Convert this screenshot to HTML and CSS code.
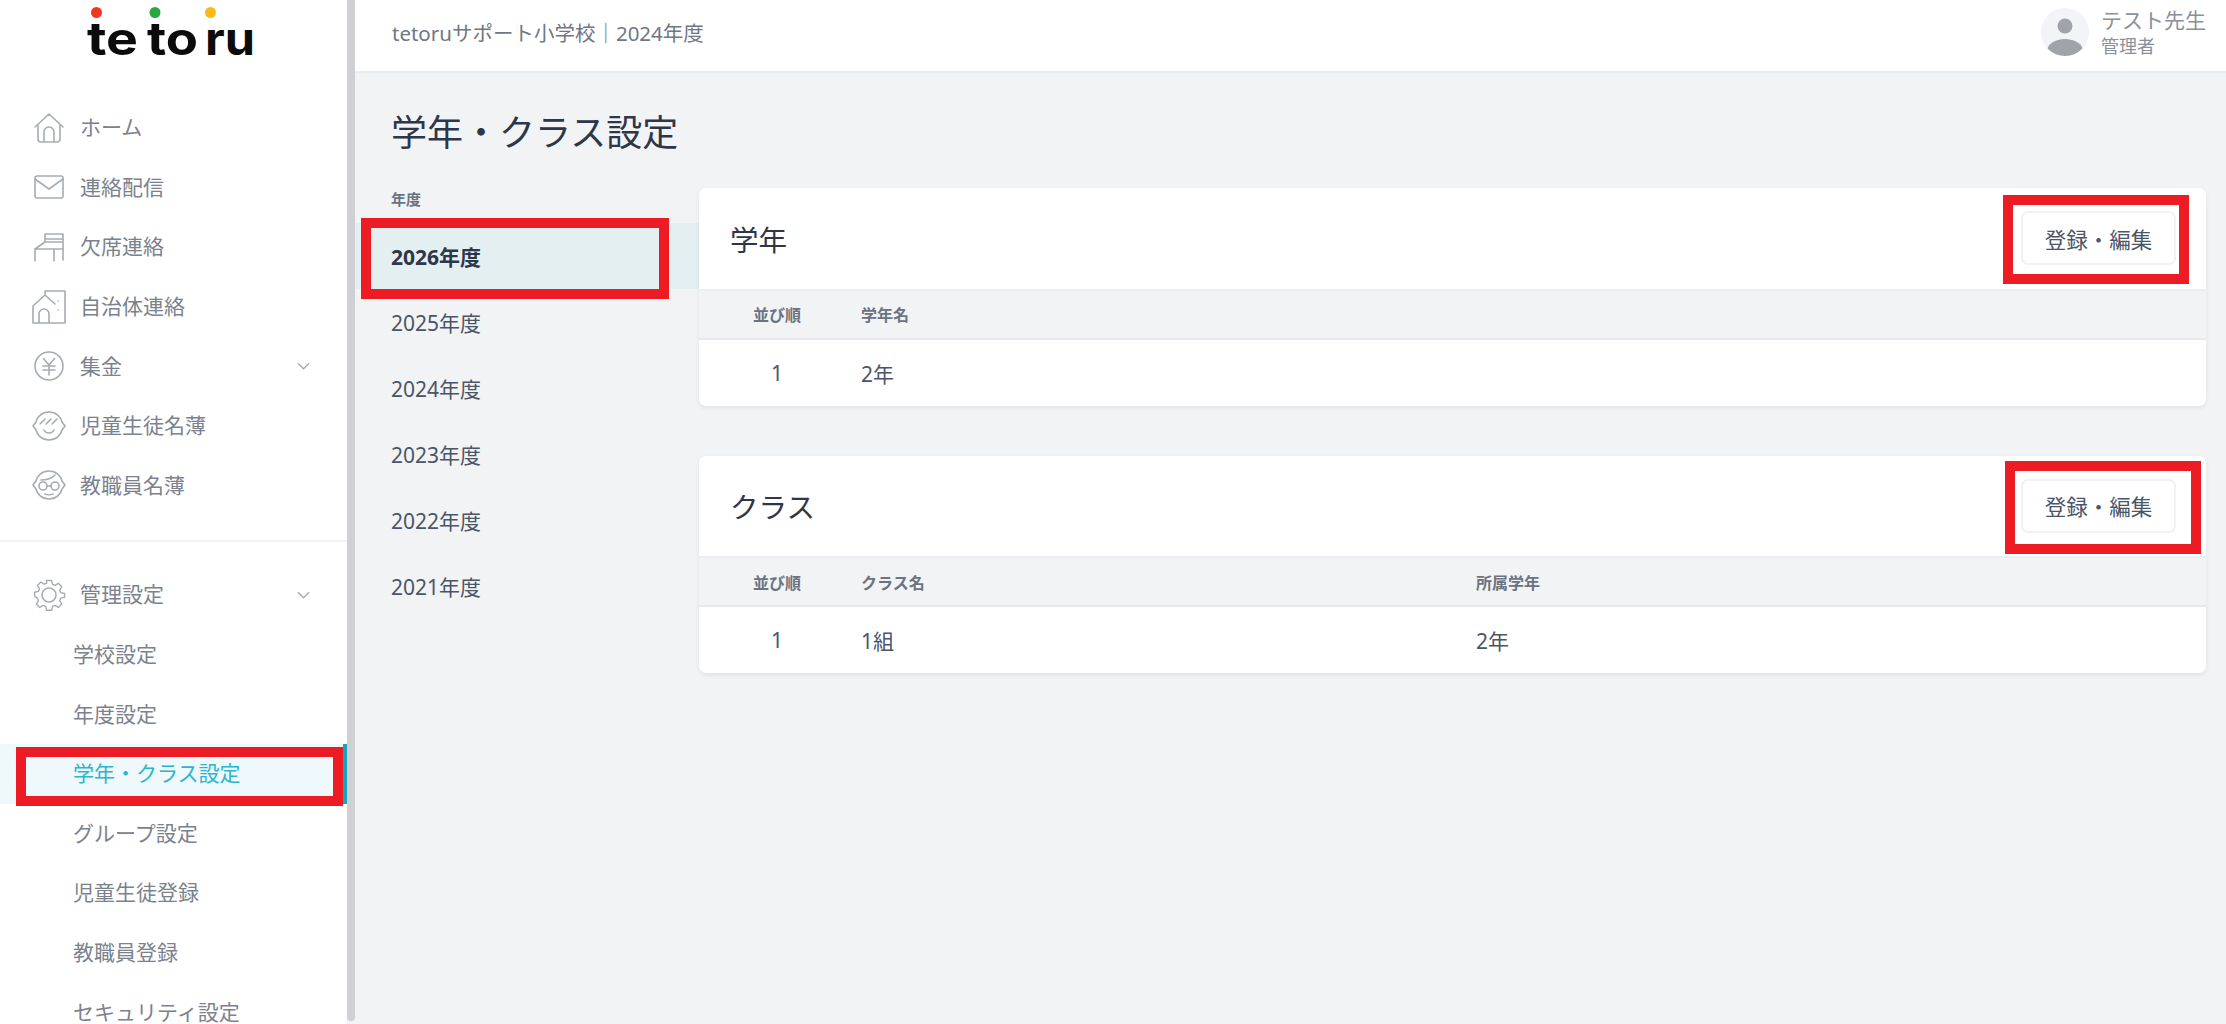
FILE: index.html
```html
<!DOCTYPE html>
<html lang="ja">
<head>
<meta charset="utf-8">
<title>学年・クラス設定</title>
<link rel="stylesheet" href="styles.css">
</head>
<body>
<div class="page">
  <aside class="sidebar">
    <div class="logo">
      <svg width="347" height="72" viewBox="0 0 347 72">
        <circle cx="96.500" cy="12.500" r="5.500" fill="#f4361e"/>
        <circle cx="155" cy="12.500" r="5.500" fill="#2ba53f"/>
        <circle cx="210.500" cy="12.500" r="5.500" fill="#fdb913"/>
        <text class="logo-text" x="87" y="55" textLength="51" lengthAdjust="spacingAndGlyphs">te</text>
        <text class="logo-text" x="147" y="55" textLength="51" lengthAdjust="spacingAndGlyphs">to</text>
        <text class="logo-text" x="205" y="55" textLength="50" lengthAdjust="spacingAndGlyphs">ru</text>
      </svg>
    </div>
    <nav class="nav nav-main">
      <a class="item"><span class="ico"><svg viewBox="0 0 34 34"><path d="M3 16 17 3l14 13M6 14v14a3 3 0 0 0 3 3h16a3 3 0 0 0 3-3V14M12 31V21a5 5 0 0 1 10 0v10"/></svg></span>ホーム</a>
      <a class="item"><span class="ico"><svg viewBox="0 0 34 34"><rect x="3" y="6" width="28" height="22" rx="2"/><path d="M3 9l14 10 14-10"/></svg></span>連絡配信</a>
      <a class="item"><span class="ico"><svg viewBox="0 0 34 34"><path d="M13 12V4h18v26M13 9h18M3 19l10-7h18M3 19h28M3 19v12M22 19v12"/></svg></span>欠席連絡</a>
      <a class="item"><span class="ico"><svg viewBox="0 0 34 34"><path d="M1 16 13 5l10 9M1 16v17h32V1H13v4M7 33V24a5 5 0 0 1 10 0v9"/><path d="M26 11v.1M26 20v.1"/></svg></span>自治体連絡</a>
      <a class="item has-sub"><span class="ico"><svg viewBox="0 0 34 34"><circle cx="17" cy="17" r="14"/><path d="M11.500 9.500 17 16l5.500-6.500M11 17h12M11 21h12M17 16v10"/></svg></span>集金<svg class="chev" viewBox="0 0 14 8"><path d="M1 1l6 6 6-6"/></svg></a>
      <a class="item"><span class="ico"><svg viewBox="0 0 34 34"><path d="M17 3c7 0 12 5 13 10l3 4-3 4c-1 5-6 10-13 10S5 26 4 21l-3-4 3-4C5 8 10 3 17 3Z"/><path d="M8 15l5-5M14 15l5-5M20 15l5-5M12 21c2 4 8 4 10 0"/></svg></span>児童生徒名薄</a>
      <a class="item"><span class="ico"><svg viewBox="0 0 34 34"><path d="M17 3c7 0 12 5 13 10l3 4-3 4c-1 5-6 10-13 10S5 26 4 21l-3-4 3-4C5 8 10 3 17 3Z"/><circle cx="11" cy="18" r="4"/><circle cx="23" cy="18" r="4"/><path d="M15 18h4M13 26c2 1 6 1 8 0M9 12c5 0 10-1 14-5"/></svg></span>教職員名薄</a>
    </nav>
    <hr class="divider">
    <nav class="nav">
      <a class="item has-sub"><span class="ico ico-lg"><svg viewBox="0 0 34 34"><circle cx="17" cy="17" r="7"/><path d="M14 2h6l1 4.500 3 1.300 4-2.500 4 4-2.500 4 1.300 3 4.500 1v4.400l-4.500 1-1.300 3 2.500 4-4 4-4-2.500-3 1.300-1 4.500h-6l-1-4.500-3-1.300-4 2.500-4-4 2.500-4-1.300-3L0 20.200v-4.400l4.500-1 1.300-3-2.500-4 4-4 4 2.500 3-1.300Z" transform="translate(2.600 .8) scale(.85)"/></svg></span>管理設定<svg class="chev" viewBox="0 0 14 8"><path d="M1 1l6 6 6-6"/></svg></a>
      <a class="item sub">学校設定</a>
      <a class="item sub">年度設定</a>
      <a class="item sub active">学年・クラス設定</a>
      <a class="item sub">グループ設定</a>
      <a class="item sub">児童生徒登録</a>
      <a class="item sub">教職員登録</a>
      <a class="item sub">セキュリティ設定</a>
    </nav>
  </aside>
  <div class="track"><div class="thumb"></div></div>
  <div class="main">
    <header class="topbar">
      <div class="school">tetoruサポート小学校｜2024年度</div>
      <div class="user">
        <svg class="avatar" viewBox="0 0 48 48"><defs><clipPath id="av"><circle cx="24" cy="24" r="24"/></clipPath></defs><circle cx="24" cy="24" r="24" fill="#f3f4f8"/><circle cx="24" cy="18" r="7.500" fill="#a1a3ab"/><ellipse cx="24" cy="43" rx="18" ry="12" fill="#a1a3ab" clip-path="url(#av)"/></svg>
        <div class="user-text"><div class="user-name">テスト先生</div><div class="user-role">管理者</div></div>
      </div>
    </header>
    <h1 class="title">学年・クラス設定</h1>
    <div class="columns">
      <div class="years">
        <div class="years-label">年度</div>
        <a class="year current">2026年度</a>
        <a class="year">2025年度</a>
        <a class="year">2024年度</a>
        <a class="year">2023年度</a>
        <a class="year">2022年度</a>
        <a class="year">2021年度</a>
      </div>
      <div class="cards">
        <section class="card">
          <div class="card-head"><h2>学年</h2><button class="btn">登録・編集</button></div>
          <table>
            <thead><tr><th class="order">並び順</th><th>学年名</th><th></th></tr></thead>
            <tbody><tr><td class="order">1</td><td>2年</td><td></td></tr></tbody>
          </table>
        </section>
        <section class="card">
          <div class="card-head"><h2>クラス</h2><button class="btn">登録・編集</button></div>
          <table>
            <thead><tr><th class="order">並び順</th><th>クラス名</th><th>所属学年</th></tr></thead>
            <tbody><tr><td class="order">1</td><td>1組</td><td>2年</td></tr></tbody>
          </table>
        </section>
      </div>
    </div>
  </div>
  <div class="mark mark-nav"></div>
  <div class="mark mark-year"></div>
  <div class="mark mark-btn1"></div>
  <div class="mark mark-btn2"></div>
</div>
</body>
</html>
```
FILE: styles.css
```css
* { box-sizing: border-box; }
html, body { margin: 0; height: 100%; }
body {
  font-family: "Noto Sans", "Noto Sans CJK JP", sans-serif;
  background: #f1f3f5;
  color: #4a5568;
}
.page {
  position: relative;
  display: flex;
  width: 2226px;
  height: 1024px;
  overflow: hidden;
}
.sidebar {
  width: 347px;
  flex: none;
  background: #fff;
  overflow: hidden;
}
.logo { height: 98px; }
.logo svg { display: block; }
.logo-text {
  font-family: Inter, sans-serif;
  font-weight: 700;
  font-size: 46px;
  fill: #0b0b0b;
}
.nav { display: flex; flex-direction: column; }
.item {
  display: flex;
  align-items: center;
  flex: none;
  height: 59.6px;
  padding-left: 32px;
  font-size: 21px;
  color: #7b828e;
  line-height: 1;
}
.ico {
  width: 34px;
  height: 34px;
  margin-right: 14px;
  flex: none;
}
.ico svg {
  display: block;
  width: 100%;
  height: 100%;
  fill: none;
  stroke: #a6acb5;
  stroke-width: 1.6;
  stroke-linecap: round;
  stroke-linejoin: round;
}
.chev {
  width: 13px;
  height: 8px;
  margin-left: auto;
  margin-right: 37px;
  fill: none;
  stroke: #a6acb5;
  stroke-width: 1.5;
}
.divider {
  margin: 25px 0 23px;
  border: 0;
  border-top: 2px solid #f1f3f5;
}
.sub { padding-left: 73px; }
.active {
  background: #eff8fa;
  color: #2bb5d0;
  border-right: 4px solid #12a5c4;
}
.track { width: 8px; flex: none; background: #f1f3f5; }
.thumb { height: 1021px; background: #cfd0d4; border-radius: 0 0 4px 4px; }
.main { flex: 1; min-width: 0; }
.topbar {
  height: 73px;
  background: #fff;
  border-bottom: 2px solid #ebedf0;
  display: flex;
  align-items: center;
  justify-content: space-between;
  padding: 0 20px 8px 37px;
}
.school { font-size: 20.5px; color: #6f7784; }
.user { display: flex; align-items: center; gap: 12px; }
.avatar { width: 48px; height: 48px; display: block; }
.user-name { font-size: 21px; line-height: 28px; color: #8a909b; }
.user-role { font-size: 18px; line-height: 24px; color: #8a909b; }
.title {
  margin: 0;
  height: 115px;
  padding: 35px 0 0 36px;
  font-size: 36px;
  line-height: 50px;
  font-weight: 400;
  color: #2d3748;
}
.columns { display: flex; padding-right: 20px; }
.years { width: 344px; flex: none; }
.years-label {
  height: 35px;
  padding-left: 36px;
  font-size: 15px;
  line-height: 23px;
  font-weight: 700;
  color: #6b7280;
}
.year {
  display: flex;
  align-items: center;
  height: 66px;
  padding-left: 36px;
  font-size: 21px;
  color: #4a5568;
}
.current { background: #e4eff1; font-weight: 700; color: #2d3748; }
.cards { flex: 1; min-width: 0; display: flex; flex-direction: column; gap: 50px; }
.card {
  background: #fff;
  border-radius: 7px;
  box-shadow: 0 2px 5px rgba(0, 0, 0, .07);
  overflow: hidden;
}
.card-head {
  height: 100.5px;
  display: flex;
  align-items: center;
  justify-content: space-between;
  padding: 0 30px 0 31px;
}
.card-head h2 {
  margin: 0;
  font-size: 28.5px;
  font-weight: 400;
  color: #2d3748;
}
.btn {
  width: 155px;
  height: 54px;
  background: #fff;
  border: 2px solid #f0f1f3;
  border-radius: 7px;
  font-family: inherit;
  font-size: 21.5px;
  color: #4a5568;
  padding: 0;
}
table { width: 100%; border-collapse: collapse; table-layout: fixed; }
th {
  height: 49px;
  background: #f1f3f5;
  border-top: 2px solid #ebedf0;
  border-bottom: 2px solid #e6e8eb;
  text-align: left;
  font-size: 16px;
  font-weight: 700;
  color: #6b7280;
  padding: 0 0 0 6px;
}
td {
  height: 67px;
  font-size: 21px;
  color: #4a5568;
  padding: 0 0 0 6px;
}
th:first-child, td:first-child { width: 156px; padding-left: 0; text-align: center; }
th:nth-child(2), td:nth-child(2) { width: 621px; }
th:nth-child(3), td:nth-child(3) { padding-left: 0; }
.mark {
  position: absolute;
  border: 10px solid #ed1c24;
  pointer-events: none;
}
.mark-nav { left: 16px; top: 747px; width: 327px; height: 59px; }
.mark-year { left: 361px; top: 218px; width: 308px; height: 81px; }
.mark-btn1 { left: 2003px; top: 195px; width: 186px; height: 89px; }
.mark-btn2 { left: 2005px; top: 461px; width: 196px; height: 93px; }
```
